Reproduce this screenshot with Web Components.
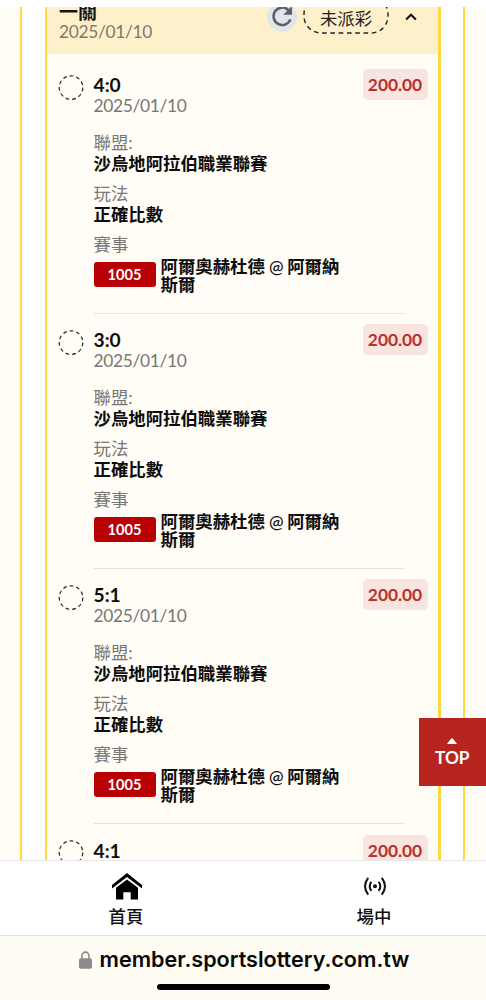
<!DOCTYPE html>
<html lang="zh-Hant">
<head>
<meta charset="utf-8">
<title>運彩投注紀錄</title>
<style>
html,body{margin:0;height:100%;background:#fff;overflow:hidden}
body{font-family:Lato,"Noto Sans CJK TC",sans-serif;font-size:17.4px;color:#111}
</style>
</head>
<body>
<bet-app></bet-app>
<script>
function define(name, html){
  const t=document.createElement('template');
  t.innerHTML=html;
  customElements.define(name, class extends HTMLElement{
    constructor(){super();this.attachShadow({mode:'open'}).append(t.content.cloneNode(true));}
  });
}

define('dashed-ring', `<style>:host{display:block;width:26px;height:26px}svg{display:block}</style>
<svg width="26" height="26" viewBox="0 0 26 26"><circle cx="13" cy="12.6" r="11.8" fill="none" stroke="#222" stroke-width="1.2" stroke-dasharray="3.7 3.04"/></svg>`);

define('amount-tag', `<style>:host{display:block;box-sizing:border-box;width:65px;height:31px;border-radius:5px;background:#f8e5df;color:#b9302d;font-weight:700;line-height:32px;text-align:center;letter-spacing:-.05px}</style><slot></slot>`);

define('match-code', `<style>:host{display:block;width:62px;height:25px;border-radius:3px;background:#b90005;color:#fff;font-size:14.6px;font-weight:700;line-height:25px;text-align:center}</style><slot></slot>`);

define('bet-field', `<style>:host{display:block;padding-bottom:8.8px}
.label{height:21.2px;line-height:21.2px;color:#777}
.value{height:21.2px;line-height:21.2px;font-weight:700;color:#0c0c0c}</style>
<div class="label"><slot name="label"></slot></div><div class="value"><slot></slot></div>`);

define('bet-item', `<style>
:host{display:grid;grid-template-columns:35px 1fr 65px;height:255.2px;padding:0 10.5px 0 11.5px;box-sizing:border-box;color:#0c0c0c}
dashed-ring{margin-top:16px;margin-left:-.5px}
.main{display:flex;flex-direction:column}
.score{margin-top:15.5px;height:21px;line-height:21px;font-size:19.2px;font-weight:700}
.date{height:21px;line-height:21px;color:#777;font-size:17.4px;letter-spacing:-.34px;margin-bottom:15.5px}
.label{height:21px;line-height:21px;color:#777}
.teams{display:flex;gap:5px;margin-top:3px;font-weight:700;line-height:18.2px}
match-code{margin-top:4px;flex:none}
.names{width:182px}
.at{font-weight:500;letter-spacing:-.7px}
.rule{height:1px;margin-top:auto;margin-right:-42px;background:#e5e3df}
amount-tag{margin-top:10.5px}
.main bet-field{height:42.4px}
</style>
<dashed-ring></dashed-ring>
<div class="main">
<div class="score"><slot></slot></div><div class="date">2025/01/10</div>
<bet-field><span slot="label">聯盟:</span>沙烏地阿拉伯職業聯賽</bet-field>
<bet-field><span slot="label">玩法</span>正確比數</bet-field>
<div class="label">賽事</div>
<div class="teams"><match-code>1005</match-code><div class="names">阿爾奧赫杜德 <span class="at">@</span> 阿爾納斯爾</div></div>
<div class="rule"></div>
</div>
<amount-tag>200.00</amount-tag>`);

define('slip-header', `<style>
:host{display:flex;height:47px;overflow:hidden;background:#fff0cc;box-sizing:border-box;padding-left:12px}
.info{flex:1}
.name{height:20px;line-height:20px;margin-top:-5px;font-size:19px;font-weight:700;color:#151515}
.date{height:20px;line-height:20.5px;color:#817969;font-size:17.4px;letter-spacing:-.34px}
.refresh{width:30px;height:30px;border-radius:50%;background:#e1e4ea;margin:-5px 6px 0 0;flex:none}
.refresh svg{display:block}
.status{position:relative;width:86px;height:38px;margin-top:-11px;line-height:45px;text-align:center;flex:none;color:#222}
.status svg{position:absolute;left:0;top:0}
.chev{display:block;margin:6px 21px 0 16px;flex:none}
</style>
<div class="info"><div class="name">一關</div><div class="date">2025/01/10</div></div>
<div class="refresh"><svg width="30" height="30" viewBox="0 0 30 30"><path d="M23.4 17.4A8.7 8.7 0 1 1 21 7.7l2 2" fill="none" stroke="#5c6068" stroke-width="2.6"/><path d="M25 3.9v8.9h-8.8z" fill="#5c6068"/></svg></div>
<div class="status"><svg width="86" height="38"><rect x="1" y="1" width="84" height="36" rx="17" fill="none" stroke="#222" stroke-width="1.4" stroke-dasharray="4.6 3.7"/></svg>未派彩</div>
<svg class="chev" width="12" height="8" viewBox="0 0 12 8"><path d="M1.1 6.6 6 1.8l4.9 4.8" fill="none" stroke="#111" stroke-width="2.1"/></svg>`);

define('top-button', `<style>
:host{display:flex;flex-direction:column;align-items:center;box-sizing:border-box;width:67.5px;height:67.5px;background:#b6251d;color:#fff;padding-top:20px;font-size:17.3px;font-weight:700;line-height:28px}
svg{display:block}</style>
<svg width="10" height="6" viewBox="0 0 10 6"><path d="M0 6 4 .7Q5-.3 6 .7L10 6z" fill="#fff"/></svg><div><slot></slot></div>`);

define('tab-item', `<style>
:host{display:flex;flex-direction:column;align-items:center;width:60px;padding-top:8px;box-sizing:border-box;color:#111;font-weight:500}
.icon{height:34px;display:flex;align-items:center}.label{line-height:28px;height:28px}</style>
<div class="icon"><slot name="icon"></slot></div><div class="label"><slot></slot></div>`);

define('tab-bar', `<style>
:host{display:grid;grid-template-columns:60px 60px;column-gap:188px;padding-left:96px;height:75px;box-sizing:border-box;border-top:1px solid #e6e6e6;background:#fff}
svg{display:block;position:relative;left:1px}</style>
<tab-item><svg slot="icon" width="32" height="28" viewBox="0 0 32 28"><path d="M1 12.9 16 1l15 11.9v3.7L16 4.9 1 16.6z"/><path d="M5 15.7 16 7.6l11 8.1v11.8h-7.3v-7.2h-7.4v7.2H5z"/></svg>首頁</tab-item>
<tab-item><svg slot="icon" width="24" height="20" viewBox="0 0 24 20" fill="none" stroke="#111" stroke-width="2"><circle cx="12" cy="10.3" r="2" fill="#111" stroke="none"/><path d="M8.3 5.7Q5.1 10.3 8.3 14.9M15.7 5.7q3.2 4.6 0 9.2M5.2 1.9Q-1.2 10.3 5.2 18.7M18.8 1.9q6.4 8.4 0 16.8"/></svg>場中</tab-item>`);

define('address-bar', `<style>
:host{display:flex;flex-direction:column;align-items:center;height:65px;box-sizing:border-box;border-top:1px solid #e3e2df;background:#fffcf4}
.url{display:flex;align-items:center;gap:8px;height:47px;margin-left:2px;color:#080808;font:600 21.55px/47px Inter,"Liberation Sans",sans-serif;white-space:nowrap}
.url span{width:310px}
svg{display:block}
.home{width:173px;height:6px;margin-top:1px;border-radius:3px;background:#000}</style>
<div class="url"><svg width="13" height="18" viewBox="0 0 13 18"><path d="M3 8V4.8a3.5 3.7 0 0 1 7 0V8" fill="none" stroke="#8c8b89" stroke-width="1.6"/><rect x="0" y="7.2" width="13" height="10.6" rx="1.8" fill="#8c8b89"/></svg><span>member.sportslottery.com.tw</span></div>
<div class="home"></div>`);

define('bet-app', `<style>
:host{display:flex;flex-direction:column;position:relative;width:486px;height:1000px;box-sizing:border-box;padding-top:6.5px;overflow:hidden;background:#fff}
.view{flex:1;min-height:0;overflow:hidden;display:grid;grid-template-columns:22px 23px 396px 22px 23px}
.edge,.slip{background:#fffdf5;box-sizing:border-box}
.left{border-right:2px solid #ffd93f}.right{border-left:2px solid #ffd93f}
.slip{border:solid #ffd93f;border-width:0 3px 0 2px;min-height:0;overflow:hidden}
.list{padding-top:5px}
top-button{position:absolute;right:0;top:718px}
tab-bar,address-bar{flex:none}
</style>
<div class="view"><div class="edge left"></div><div></div>
<div class="slip"><slip-header></slip-header><div class="list"><bet-item>4:0</bet-item><bet-item>3:0</bet-item><bet-item>5:1</bet-item><bet-item>4:1</bet-item></div></div>
<div></div><div class="edge right"></div></div>
<tab-bar></tab-bar><address-bar></address-bar>
<top-button>TOP</top-button>`);
</script>
</body>
</html>
